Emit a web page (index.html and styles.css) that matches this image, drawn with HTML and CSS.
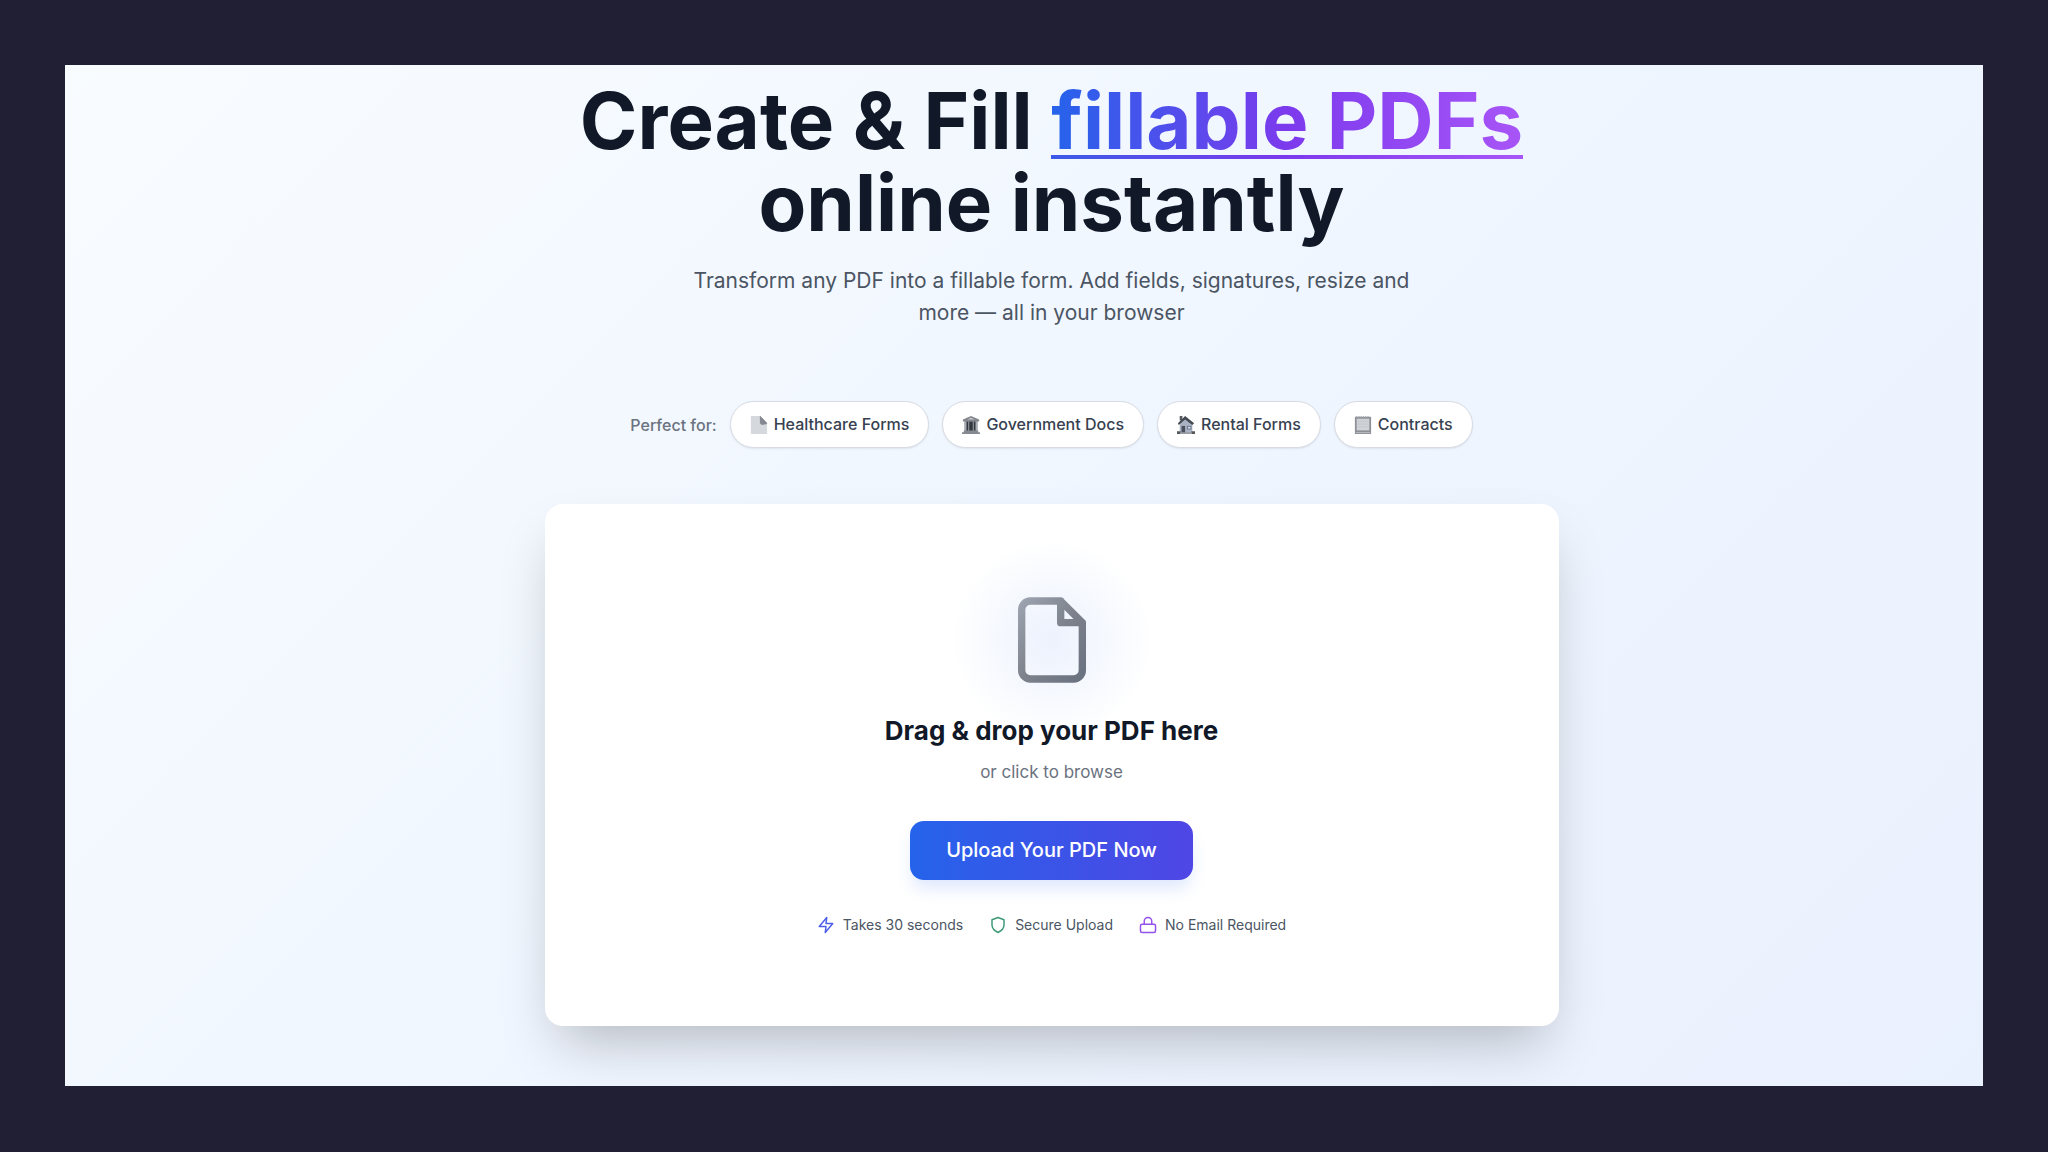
FILE: index.html
```
<!DOCTYPE html>
<html lang="en">
<head>
  <meta charset="UTF-8">
  <meta name="viewport" content="width=device-width, initial-scale=1.0">
  <title>Create &amp; Fill fillable PDFs</title>
  <link rel="stylesheet" href="styles.css">
</head>
<body>
  <main class="page">
    <div class="container">
      <h1>Create &amp; Fill <span class="highlight">fillable PDFs</span><br>online instantly</h1>
      <p class="subtitle">Transform any PDF into a fillable form. Add fields, signatures, resize and more — all in your browser</p>

      <div class="uses">
        <span class="uses-label">Perfect for:</span>
        <ul class="tags">
          <li class="tag">
            <svg class="tag-icon" viewBox="0 0 20 20" aria-hidden="true">
              <path d="M1 0h10l8 8v12H1z" fill="#d5d9de"/>
              <path d="M11 0l8 8-6 1z" fill="#4b5058"/>
              <path d="M11 0v8l2 2 6-1z" fill="#858a92"/>
            </svg>
            Healthcare Forms
          </li>
          <li class="tag">
            <svg class="tag-icon" viewBox="0 0 20 20" aria-hidden="true">
              <path d="M10 0l9 4v2H1V4z" fill="#83868c"/>
              <path d="M10 2l4 2H6z" fill="#c9ccd0"/>
              <path d="M3 6h14v11H3z" fill="#343840"/>
              <path d="M3 6h2v11H3zM7 6h1v11H7zM12 6h1v11h-1zM15 6h2v11h-2z" fill="#a9adb4"/>
              <path d="M2 16h16v2H2zM0 18h20v2H0z" fill="#858990"/>
            </svg>
            Government Docs
          </li>
          <li class="tag">
            <svg class="tag-icon" viewBox="0 0 20 20" aria-hidden="true">
              <path d="M3 8l6-5 8 6v10H3z" fill="#aab3c3"/>
              <path d="M3 0h3v5H3z" fill="#555961"/>
              <path d="M9 0l10 8-2 2-8-6-7 6-1-2z" fill="#454951"/>
              <path d="M5 11h4v8H5z" fill="#4c505c"/>
              <path d="M11 11h5v4h-5z" fill="#657088"/>
              <path d="M12 12h3v2h-3z" fill="#d5dce8"/>
              <path d="M0 17h4v3H0zM16 17h4v3h-4z" fill="#55595e"/>
              <path d="M4 18h12v2H4z" fill="#989ca4"/>
            </svg>
            Rental Forms
          </li>
          <li class="tag">
            <svg class="tag-icon" viewBox="0 0 20 20" aria-hidden="true">
              <path d="M1 1h18v19H1z" fill="#8d9096"/>
              <path d="M3 3h14v13H3z" fill="#d0d3d8"/>
              <path d="M2 18h16v1H2z" fill="#c0c3c8"/>
              <path d="M2 1h16" stroke="#a4a7ac" stroke-width="2" stroke-dasharray="1 1"/>
              <path d="M4 6h12M4 9h12M4 12h12" stroke="#c4c8ce"/>
            </svg>
            Contracts
          </li>
        </ul>
      </div>

      <section class="card">
        <div class="file-icon">
          <svg viewBox="0 0 24 24" fill="none" aria-hidden="true">
            <defs>
              <linearGradient id="file-stroke" x1="0" y1="0" x2="1" y2="1">
                <stop offset="0" stop-color="#9ca3af"/>
                <stop offset="0.5" stop-color="#7d828c"/>
                <stop offset="1" stop-color="#6b7280"/>
              </linearGradient>
            </defs>
            <path d="M14 3v5h5M7 21h10a2 2 0 0 0 2-2V8l-5-5H7a2 2 0 0 0-2 2v14a2 2 0 0 0 2 2z" stroke="url(#file-stroke)" stroke-width="1.7" stroke-linecap="round" stroke-linejoin="round"/>
          </svg>
        </div>
        <h2>Drag &amp; drop your PDF here</h2>
        <p class="hint">or click to browse</p>
        <button class="upload" type="button">Upload Your PDF Now</button>
        <ul class="features">
          <li>
            <svg class="feature-icon blue" viewBox="0 0 24 24" aria-hidden="true"><path d="M13 2L3 14h9l-1 8 10-12h-9l1-8z"/></svg>
            Takes 30 seconds
          </li>
          <li>
            <svg class="feature-icon green" viewBox="0 0 24 24" aria-hidden="true"><path d="M12 22s8-4 8-10V5l-8-3-8 3v7c0 6 8 10 8 10z"/></svg>
            Secure Upload
          </li>
          <li>
            <svg class="feature-icon purple" viewBox="0 0 24 24" aria-hidden="true"><rect x="2" y="11" width="20" height="11" rx="2"/><path d="M7 11V7a5 5 0 0 1 10 0v4"/></svg>
            No Email Required
          </li>
        </ul>
      </section>
    </div>
  </main>
</body>
</html>
```
FILE: styles.css
```
* {
  box-sizing: border-box;
}

body {
  margin: 0;
  padding: 65px;
  font-family: Inter, "Liberation Sans", sans-serif;
  background-color: #201f33;
  color: #111827;
}

ul {
  margin: 0;
  padding: 0;
  list-style: none;
}

.page {
  padding: 15px 0 60px 55px;
  background: linear-gradient(135deg, #f8fcff 0%, #f0f6ff 50%, #eaf1fe 100%);
  overflow: hidden;
}

.container {
  max-width: 1014px;
  margin: 0 auto;
  text-align: center;
}

h1 {
  margin: 0;
  font-size: 78px;
  line-height: 82px;
  font-weight: 700;
}

/* first layer is the underline, second one fills the letters */
.highlight {
  color: transparent;
  background-image:
    linear-gradient(90deg, #3b5be8, #7c3aed 50%, #a855f7),
    linear-gradient(90deg, #2563eb, #7c3aed 50%, #a855f7);
  background-size: 100% 4px, 100% 100%;
  background-position: 0 calc(100% - 9px), 0 0;
  background-repeat: no-repeat;
  -webkit-background-clip: border-box, text;
  background-clip: border-box, text;
}

.subtitle {
  max-width: 740px;
  margin: 21px auto 72px;
  font-size: 21px;
  line-height: 32px;
  color: #4b5563;
}

.uses {
  display: flex;
  flex-wrap: wrap;
  justify-content: center;
  align-items: center;
  gap: 13px;
  margin-bottom: 56px;
}

.uses-label {
  font-size: 16px;
  font-weight: 500;
  color: #6b7280;
}

.tags {
  display: flex;
  flex-wrap: wrap;
  justify-content: center;
  gap: 13px;
}

.tag {
  display: flex;
  align-items: center;
  gap: 6px;
  padding: 11px 19px;
  border: 1px solid #d8dbe2;
  border-radius: 24px;
  background-color: #fff;
  box-shadow: 0 1px 2px rgba(0, 0, 0, 0.08);
  font-size: 16px;
  line-height: 23px;
  font-weight: 500;
  color: #374151;
}

.tag-icon {
  width: 18px;
  height: 18px;
}

.card {
  display: flex;
  flex-direction: column;
  align-items: center;
  padding: 84px 32px 91px;
  border-radius: 18px;
  background-color: #fff;
  box-shadow: 0 28px 56px -14px rgba(0, 0, 0, 0.25);
}

.file-icon {
  display: flex;
  position: relative;
}

/* soft glow behind the file */
.file-icon::before {
  content: "";
  position: absolute;
  inset: -48px;
  background: radial-gradient(closest-side, #edf2fd, #f5f8fe 50%, #fff);
}

.file-icon svg {
  position: relative;
  width: 104px;
  height: 104px;
}

h2 {
  position: relative;
  margin: 21px 0 9px;
  font-size: 26px;
  line-height: 36px;
  font-weight: 700;
}

.hint {
  margin: 0 0 35px;
  font-size: 17px;
  line-height: 28px;
  color: #6b7280;
}

.upload {
  padding: 16px 36px;
  border: 0;
  border-radius: 14px;
  background: linear-gradient(90deg, #2563eb, #4f46e5);
  box-shadow: 0 11px 17px -3px rgba(37, 99, 235, 0.16);
  font-family: inherit;
  font-size: 20px;
  line-height: 27px;
  font-weight: 500;
  color: #fff;
  cursor: pointer;
}

.features {
  display: flex;
  flex-wrap: wrap;
  justify-content: center;
  gap: 26px;
  margin-top: 35px;
  font-size: 14px;
  line-height: 20px;
  color: #4b5563;
}

.features li {
  display: flex;
  align-items: center;
  gap: 8px;
}

.feature-icon {
  width: 18px;
  height: 18px;
  fill: none;
  stroke-width: 2;
  stroke-linecap: round;
  stroke-linejoin: round;
}

.blue {
  stroke: #4f5fe8;
}

.green {
  stroke: #3f9b78;
}

.purple {
  stroke: #9353ea;
}
```
